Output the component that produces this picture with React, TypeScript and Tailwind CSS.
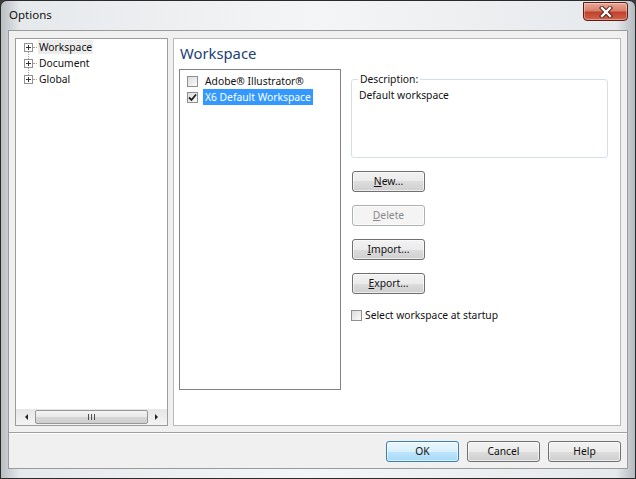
import React from "react";

const font = "font-['Noto_Sans',sans-serif]";

const Btn = ({
  children,
  disabled,
  primary,
}: {
  children: React.ReactNode;
  disabled?: boolean;
  primary?: boolean;
}) => {
  const look = disabled
    ? "border-[#adb2b5] bg-[#f4f4f4] text-[#8a8a8a]"
    : primary
    ? "border-[#3c7fb1] bg-[linear-gradient(#eaf6fd_0%,#d9f0fc_50%,#bee6fd_50%,#a7d9f5_100%)] text-[#111]"
    : "border-[#707070] bg-[linear-gradient(#f2f2f2_0%,#ebebeb_50%,#dddddd_50%,#cfcfcf_100%)] text-[#111]";
  return (
    <div
      className={`w-[73px] h-[21px] rounded-[3px] border flex items-center justify-center text-[10.3px] leading-none shadow-[inset_0_0_0_1px_rgba(255,255,255,0.6)] ${look}`}
    >
      {children}
    </div>
  );
};

const CheckBox = ({ checked }: { checked?: boolean }) => (
  <div className="w-[11px] h-[11px] border border-[#8e8f8f] bg-[linear-gradient(135deg,#dcdcdc,#fafafa)] flex items-center justify-center shrink-0">
    {checked && (
      <svg width="9" height="9" viewBox="0 0 9 9">
        <path d="M1 4.5 L3.5 7 L8 1.5" fill="none" stroke="#1c1c1c" strokeWidth="1.8" />
      </svg>
    )}
  </div>
);

const PlusBox = () => (
  <div className="w-[9px] h-[9px] border border-[#919191] bg-white relative shrink-0">
    <div className="absolute left-[1px] top-[3px] w-[5px] h-px bg-[#333]" />
    <div className="absolute left-[3px] top-[1px] w-px h-[5px] bg-[#333]" />
  </div>
);

const treeItems = ["Workspace", "Document", "Global"];

export default function App() {
  return (
    <div className={`w-[636px] h-[479px] bg-[#3a3a3a] ${font} text-[#111]`}>
      <div className="h-full flex flex-col rounded-t-[7px] border border-[#2a2a2a] bg-[linear-gradient(90deg,#b9bec3,#e6e9ec_3%,#f4f5f6_50%,#e6e9ec_97%,#b5babf)]">
        {/* title bar */}
        <div className="h-[29px] flex items-start justify-between pl-[8px] pr-[7px]">
          <span className="mt-[7px] text-[11.5px] leading-[14px] text-[#111]">Options</span>
          <div className="mt-[1px] w-[45px] h-[19px] rounded-b-[4px] rounded-tr-[3px] border border-[#5c1d14] bg-[linear-gradient(#e9a797_0%,#d8806d_45%,#c2412c_55%,#d0654c_100%)] flex items-center justify-center shadow-[inset_0_0_0_1px_rgba(255,255,255,0.35)]">
            <svg width="14" height="12" viewBox="0 0 14 12">
              <path d="M3 2 L11 10 M11 2 L3 10" stroke="#4a1a12" strokeWidth="4.2" strokeLinecap="square" />
              <path d="M3 2 L11 10 M11 2 L3 10" stroke="#ffffff" strokeWidth="2.4" strokeLinecap="square" />
            </svg>
          </div>
        </div>

        {/* client area */}
        <div className="mx-[7px] mb-[9px] flex-1 border border-[#9b9b9b] bg-[#f0f0f0] flex flex-col">
          <div className="flex gap-[5px] px-[6px] pt-[7px] h-[396px]">
            {/* tree */}
            <div className="w-[153px] h-[388px] border border-[#9c9c9c] bg-white flex flex-col">
              <div className="flex-1 pl-[8px] relative">
                <div className="absolute left-[12px] top-[12px] h-[32px] border-l border-dotted border-[#a0a0a0]" />
                {treeItems.map((t, i) => (
                  <div key={t} className="h-[16px] flex items-center relative">
                    <PlusBox />
                    <div className="w-[4px] border-t border-dotted border-[#a0a0a0]" />
                    <span
                      className={`ml-[1px] px-[1px] text-[10.3px] leading-[14px] ${
                        i === 0 ? "bg-[#ececec]" : ""
                      }`}
                    >
                      {t}
                    </span>
                  </div>
                ))}
              </div>
              {/* horizontal scrollbar */}
              <div className="h-[16px] bg-[linear-gradient(#e6e6e6,#f4f4f4)] flex items-center px-[5px] gap-[3px]">
                <div className="w-[11px] flex justify-center">
                  <div className="w-0 h-0 border-y-[3px] border-y-transparent border-r-[3px] border-r-[#222]" />
                </div>
                <div className="flex-1 h-[14px] rounded-[2px] border border-[#979797] bg-[linear-gradient(#f3f3f3_0%,#e8e8e8_50%,#d6d6d6_50%,#cfcfcf_100%)] flex items-center justify-center gap-[2px]">
                  <div className="w-px h-[6px] bg-[#4d4d4d]" />
                  <div className="w-px h-[6px] bg-[#4d4d4d]" />
                  <div className="w-px h-[6px] bg-[#4d4d4d]" />
                </div>
                <div className="w-[11px] flex justify-center">
                  <div className="w-0 h-0 border-y-[3px] border-y-transparent border-l-[3px] border-l-[#222]" />
                </div>
              </div>
            </div>

            {/* workspace page */}
            <div className="flex-1 h-[388px] border border-[#b9b9b9] bg-white flex flex-col pl-[5px]">
              <div className="pt-[4px] pl-[1px] text-[14.8px] leading-[20px] text-[#213f77]">Workspace</div>
              <div className="mt-[6px] flex gap-[10px]">
                {/* list */}
                <div className="w-[162px] h-[321px] border border-[#828282] bg-white pt-[3px] pl-[7px]">
                  <div className="h-[16px] flex items-center gap-[5px]">
                    <CheckBox />
                    <span className="px-[2px] text-[10.3px] leading-[16px]">Adobe® Illustrator®</span>
                  </div>
                  <div className="h-[16px] flex items-center gap-[5px]">
                    <CheckBox checked />
                    <span className="px-[2px] text-[10.3px] leading-[16px] bg-[#3399ff] text-white">
                      X6 Default Workspace
                    </span>
                  </div>
                </div>

                {/* right column */}
                <div className="flex flex-col pt-[10px]">
                  <div className="relative w-[257px] h-[79px] border border-[#d5dfe5] rounded-[3px] pt-[8px] px-[7px]">
                    <span className="absolute -top-[8px] left-[6px] bg-white px-[2px] text-[10.3px] leading-[14px]">
                      Description:
                    </span>
                    <div className="text-[10.3px] leading-[14px]">Default workspace</div>
                  </div>
                  <div className="mt-[13px] ml-[1px] flex flex-col gap-[13px]">
                    <Btn>
                      <u>N</u>ew...
                    </Btn>
                    <Btn disabled>
                      <u>D</u>elete
                    </Btn>
                    <Btn>
                      <u>I</u>mport...
                    </Btn>
                    <Btn>
                      <u>E</u>xport...
                    </Btn>
                  </div>
                  <div className="mt-[14px] flex items-center gap-[3px]">
                    <CheckBox />
                    <span className="text-[10.3px] leading-[14px]">Select workspace at startup</span>
                  </div>
                </div>
              </div>
            </div>
          </div>

          {/* separator */}
          <div className="mt-[5px] border-t border-[#a0a0a0] border-b border-b-white" />

          {/* dialog buttons */}
          <div className="flex justify-end gap-[8px] pr-[6px] pt-[7px]">
            <Btn primary>OK</Btn>
            <Btn>Cancel</Btn>
            <Btn>Help</Btn>
          </div>
        </div>
      </div>
    </div>
  );
}
